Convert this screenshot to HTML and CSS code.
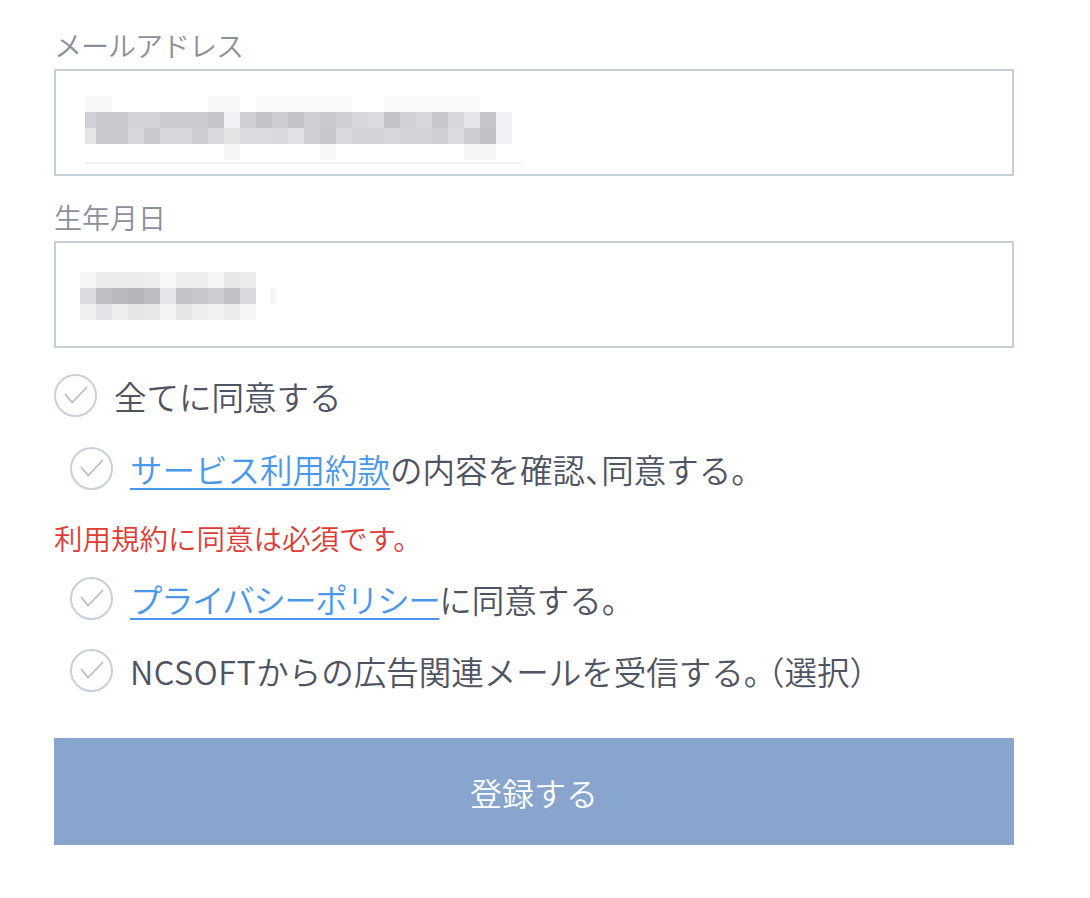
FILE: index.html
```html
<!DOCTYPE html>
<html lang="ja">
<head>
<meta charset="utf-8">
<title>登録</title>
<link rel="stylesheet" href="styles.css">
</head>
<body>
<div class="form">
  <div class="field">
    <div class="label label-email">メールアドレス</div>
    <div class="input input-email">
      <div class="blur">
        <div class="br e1"></div>
        <div class="br e2"></div>
        <div class="br e3"></div>
        <div class="br e4"></div>
        <div class="eline"></div>
      </div>
    </div>
  </div>
  <div class="field field-2">
    <div class="label">生年月日</div>
    <div class="input input-dob">
      <div class="blur">
        <div class="br d1"></div>
        <div class="br d2"></div>
        <div class="br d3"></div>
      </div>
    </div>
  </div>

  <div class="check check-all">
    <svg class="circ" viewBox="0 0 43 43" width="43" height="43"><circle cx="21.5" cy="21.5" r="20.5" fill="none" stroke="#c9d0da" stroke-width="2"/><polyline points="11.5,20.5 18.2,28.5 32.5,13.5" fill="none" stroke="#b7bec9" stroke-width="1.8" stroke-linecap="round" stroke-linejoin="round"/></svg>
    <span class="ctext">全てに同意する</span>
  </div>

  <div class="check sub check-terms">
    <svg class="circ" viewBox="0 0 43 43" width="43" height="43"><circle cx="21.5" cy="21.5" r="20.5" fill="none" stroke="#c9d0da" stroke-width="2"/><polyline points="11.5,20.5 18.2,28.5 32.5,13.5" fill="none" stroke="#b7bec9" stroke-width="1.8" stroke-linecap="round" stroke-linejoin="round"/></svg>
    <span class="ctext"><a class="link" href="#">サービス利用約款</a>の内容を確認<span class="half">、</span>同意する。</span>
  </div>

  <div class="error">利用規約に同意は必須です。</div>

  <div class="check sub check-privacy">
    <svg class="circ" viewBox="0 0 43 43" width="43" height="43"><circle cx="21.5" cy="21.5" r="20.5" fill="none" stroke="#c9d0da" stroke-width="2"/><polyline points="11.5,20.5 18.2,28.5 32.5,13.5" fill="none" stroke="#b7bec9" stroke-width="1.8" stroke-linecap="round" stroke-linejoin="round"/></svg>
    <span class="ctext"><a class="link link-tight" href="#">プライバシーポリシー</a>に同意する。</span>
  </div>

  <div class="check sub check-ads">
    <svg class="circ" viewBox="0 0 43 43" width="43" height="43"><circle cx="21.5" cy="21.5" r="20.5" fill="none" stroke="#c9d0da" stroke-width="2"/><polyline points="11.5,20.5 18.2,28.5 32.5,13.5" fill="none" stroke="#b7bec9" stroke-width="1.8" stroke-linecap="round" stroke-linejoin="round"/></svg>
    <span class="ctext"><span class="latin">NCSOFT</span>からの広告関連メールを受信する<span class="half">。</span>（選択）</span>
  </div>

  <button class="submit" type="button">登録する</button>
</div>
</body>
</html>
```

FILE: styles.css
```css
html, body {
  margin: 0;
  padding: 0;
  background: #ffffff;
}

body {
  font-family: "Noto Sans CJK JP", "Noto Sans", sans-serif;
  font-weight: 350;
  color: #4f5464;
}

.form {
  width: 960px;
  padding: 26px 0 40px 54px;
}

.label {
  font-size: 28px;
  line-height: 38px;
  height: 38px;
  margin-bottom: 5px;
  color: #8b909d;
}

.label-email {
  letter-spacing: -1px;
}

.field-2 {
  margin-top: 22px;
}

.input {
  box-sizing: border-box;
  height: 107px;
  border: 2px solid #c6ced9;
  background: #fff;
}

.input-email {
  padding: 25px 0 0 29px;
}

.input-dob {
  padding: 29px 0 0 24px;
}

.br {
  height: 16px;
}

.e1, .e2, .e3, .e4 {
  width: 427px;
}

.e1 {
  background: linear-gradient(to right, #f8f8f9 0 27px, #fff 27px 123px, #f7f7f8 123px 155px, #fff 155px 171px, #f9f9fa 171px 267px, #fff 267px 299px, #f9f9fa 299px 395px, #fff 395px);
}

.e2 {
  background: linear-gradient(to right, #d0d0d6 0 11px, #c9c9d0 11px 43px, #d2d2d8 43px 75px, #cbcbd2 75px 123px, #c4c4cb 123px 139px, #f2f2f4 139px 155px, #cfcfd5 155px 171px, #c3c3ca 171px 187px, #ccccd2 187px 203px, #c2c2c9 203px 219px, #cfcfd5 219px 235px, #c8c8cf 235px 251px, #ceced4 251px 267px, #d6d6dc 267px 283px, #dcdce0 283px 299px, #c2c2c9 299px 315px, #d0d0d6 315px 331px, #d6d6dc 331px 347px, #c6c6cd 347px 363px, #d8d8dc 363px 379px, #e6e6ea 379px 395px, #c4c4cb 395px 411px, #f2f2f4 411px 427px);
}

.e3 {
  background: linear-gradient(to right, #e6e6e9 0 11px, #c8c8cf 11px 43px, #d8d8dc 43px 59px, #c8c8cf 59px 75px, #d6d6db 75px 107px, #ccccd2 107px 123px, #d9d9de 123px 139px, #e4e4e7 139px 155px, #dcdce0 155px 187px, #dadade 187px 203px, #e1e1e4 203px 219px, #cfcfd5 219px 235px, #c6c6cd 235px 251px, #dadade 251px 267px, #d3d3d8 267px 299px, #d6d6db 299px 315px, #d3d3d8 315px 347px, #cfcfd5 347px 363px, #dcdce0 363px 379px, #cdcdd3 379px 395px, #c0c0c7 395px 411px, #f2f2f4 411px 427px);
}

.e4 {
  background: linear-gradient(to right, #fff 0 139px, #f5f5f6 139px 155px, #fff 155px 235px, #f7f7f8 235px 251px, #fff 251px 379px, #f6f6f7 379px 411px, #fff 411px);
}

.eline {
  width: 437px;
  height: 2px;
  margin-top: 2px;
  background: #f3f3f5;
}

.d1, .d2, .d3 {
  width: 200px;
}

.d1 {
  background: linear-gradient(to right, #f6f6f7 0 16px, #ececef 16px 48px, #ebebee 48px 64px, #ededf0 64px 80px, #f7f7f8 80px 96px, #ededf0 96px 128px, #f5f5f6 128px 144px, #e7e7ea 144px 160px, #ececef 160px 176px, #fff 176px);
}

.d2 {
  background: linear-gradient(to right, #dcdce0 0 16px, #bebec5 16px 32px, #b8b8bf 32px 48px, #b4b4bb 48px 64px, #bcbcc3 64px 80px, #e5e5e8 80px 96px, #c2c2c9 96px 112px, #c6c6cd 112px 128px, #cdcdd3 128px 144px, #c0c0c7 144px 160px, #dadade 160px 176px, #fff 176px 190px, #f6f6f7 190px 196px, #fff 196px);
}

.d3 {
  background: linear-gradient(to right, #f0f0f2 0 16px, #e3e3e7 16px 32px, #ededf0 32px 48px, #e6e6e9 48px 64px, #e8e8eb 64px 80px, #f4f4f5 80px 96px, #e5e5e8 96px 112px, #ededf0 112px 128px, #f2f2f4 128px 144px, #ececef 144px 160px, #f6f6f7 160px 176px, #fff 176px);
}

.check {
  display: flex;
  align-items: center;
  height: 43px;
}

.check-all {
  margin-top: 26px;
}

.check-terms {
  margin-top: 30px;
}

.check-privacy {
  margin-top: 20px;
}

.check-ads {
  margin-top: 29px;
}

.sub {
  padding-left: 16px;
}

.circ {
  flex: none;
  display: block;
}

.ctext {
  margin-left: 17px;
  font-size: 32.5px;
  line-height: 43px;
  white-space: nowrap;
  color: #4f5464;
}

.latin {
  letter-spacing: 0.5px;
}

.check-terms .half {
  letter-spacing: -0.5em;
}

.check-ads .half {
  letter-spacing: -0.25em;
}

.link {
  color: #4a97ee;
  text-decoration: underline;
  text-decoration-thickness: 2px;
  text-underline-offset: 5px;
}

.link-tight {
  letter-spacing: -1.5px;
}

.error {
  margin-top: 29px;
  font-size: 28.5px;
  line-height: 38px;
  height: 38px;
  color: #e03b35;
}

.submit {
  display: block;
  box-sizing: border-box;
  width: 960px;
  height: 107px;
  margin-top: 46px;
  border: 0;
  padding: 0;
  background: #88a6cd;
  color: #ffffff;
  font-family: "Noto Sans CJK JP", "Noto Sans", sans-serif;
  font-weight: 350;
  font-size: 32px;
  cursor: pointer;
}
```
